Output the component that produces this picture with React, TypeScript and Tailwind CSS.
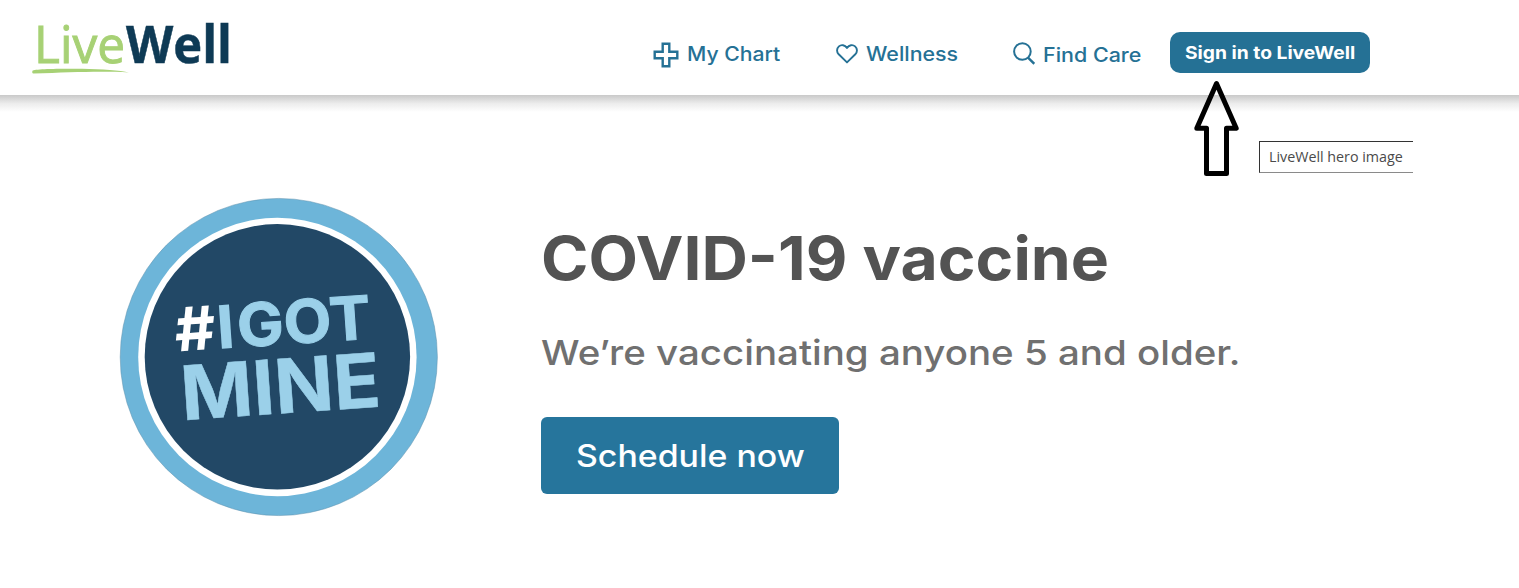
function Logo() {
    return (
        <svg className="h-[84px] w-[230px]" viewBox="0 0 230 84" role="img" aria-label="LiveWell">
            <text x="2" y="62.8" textLength="91" lengthAdjust="spacingAndGlyphs" fill="#a7d175" stroke="#a7d175" strokeWidth="1" className="font-['Open_Sans'] text-[52px] font-normal">Live</text>
            <text x="94" y="62.8" textLength="106" lengthAdjust="spacingAndGlyphs" fill="#0e3a55" stroke="#0e3a55" strokeWidth=".5" className="font-['Open_Sans'] text-[52px] font-bold">Well</text>
            <path d="M.5 70.8 C2 69 25 68.6 50 68.8 C70 69 88 70.7 97 72.4 C70 71 40 72 1.5 73.6 C0 73.2 0 72.4 .5 70.8Z" fill="#a7d175" />
        </svg>
    );
}

function PlusIcon() {
    return (
        <svg className="h-[26px] w-[26px]" viewBox="0 0 26 26" fill="none" stroke="#257195" strokeWidth="2.4">
            <path d="M9.7 1.7h6.6v8h8v6.6h-8v8H9.7v-8h-8V9.7h8z" />
        </svg>
    );
}

function HeartIcon() {
    return (
        <svg className="h-[20px] w-[22px]" viewBox="0 0 22 20" fill="none" stroke="#257195" strokeWidth="1.9" strokeLinejoin="round">
            <path d="M11 3.9C8.8.9 5.3.2 2.9 2.4.5 4.6.5 8 2.7 10.3L11 18.4l8.3-8.1c2.2-2.3 2.2-5.7-.2-7.9C16.7.2 13.2.9 11 3.9z" />
        </svg>
    );
}

function SearchIcon() {
    return (
        <svg className="h-[23px] w-[22px]" viewBox="0 0 22 23" fill="none" stroke="#257195" strokeWidth="2">
            <circle cx="9.4" cy="9.5" r="8.3" />
            <path d="M15 15.6l6.3 6.2" strokeWidth="2.4" />
        </svg>
    );
}

function Badge() {
    return (
        <svg className="h-[320px] w-[320px] shrink-0" viewBox="0 0 320 320" role="img" aria-label="#I GOT MINE">
            <circle cx="159.8" cy="160" r="158.6" fill="#6db5d9" stroke="#5e91ad" strokeWidth=".5" />
            <circle cx="158.4" cy="160" r="139.2" fill="#fff" />
            <circle cx="158.4" cy="159.8" r="132.7" fill="#224866" />
            <g className="font-['Inter'] font-bold" fill="#9bd0e9">
                <text transform="translate(57 154.5) rotate(-4)" fontSize="60" textLength="41" lengthAdjust="spacingAndGlyphs" fill="#fff">#</text>
                <text transform="translate(98.5 152) rotate(-4)" fontSize="60" textLength="19" lengthAdjust="spacingAndGlyphs">I</text>
                <text transform="translate(119.5 150.6) rotate(-4)" fontSize="60" textLength="134" lengthAdjust="spacingAndGlyphs" stroke="#9bd0e9" strokeWidth="1">GOT</text>
                <text transform="translate(63.5 223.3) rotate(-4)" fontSize="75" textLength="200" lengthAdjust="spacingAndGlyphs" stroke="#9bd0e9" strokeWidth=".5">MINE</text>
            </g>
        </svg>
    );
}

function Arrow() {
    return (
        <svg className="absolute left-[1190px] top-[78px] h-[102px] w-[52px]" viewBox="0 0 52 102" fill="none" stroke="#000" strokeWidth="5" strokeLinejoin="round">
            <path d="M26.5 5.5 L46.2 50.3 H36.5 V95.5 H16.5 V50.3 H6.8 Z" />
        </svg>
    );
}

export default function App() {
    return (
        <div className="relative h-[588px] w-[1519px] overflow-hidden bg-white font-['Inter',sans-serif]">
            <header className="flex h-[95px] items-start bg-white pl-[32px] text-[19.5px] font-medium leading-6 text-[#257195]">
                <div className="w-[621px]">
                    <Logo />
                </div>
                <a className="flex w-[183px] gap-[8px] pt-[42px]">
                    <PlusIcon />
                    <span className="origin-left scale-x-[1.085] whitespace-nowrap">My Chart</span>
                </a>
                <a className="flex w-[177px] gap-[8px] pt-[42px]">
                    <span className="pt-[2px]"><HeartIcon /></span>
                    <span className="origin-left scale-x-[1.095] whitespace-nowrap">Wellness</span>
                </a>
                <a className="flex w-[157px] gap-[8px] pt-[42px]">
                    <SearchIcon />
                    <span className="origin-left scale-x-[1.1] whitespace-nowrap pt-px">Find Care</span>
                </a>
                <button className="mt-[32px] flex h-[41px] w-[200px] items-center whitespace-nowrap rounded-[10px] bg-[#257195] pl-[15px] text-[17.5px] font-bold text-white">
                    <span className="origin-left scale-x-[1.1]">Sign in to LiveWell</span>
                </button>
            </header>
            <div className="h-[17px] bg-linear-to-b from-[#c9c9c9] via-[#ececec] to-white" />

            <main className="flex pl-[119px] pt-[85px]">
                <Badge />
                <section className="ml-[102px] pt-[24px]">
                    <h1 className="h-[74px] w-fit origin-left scale-x-[1.062] whitespace-nowrap text-[60.5px] font-bold leading-[74px] text-[#535353]">COVID-19 vaccine</h1>
                    <p className="mt-[37px] h-[42px] w-fit origin-left scale-x-[1.115] whitespace-nowrap text-[34.5px] font-[550] leading-[42px] text-[#707070]">We’re vaccinating anyone 5 and older.</p>
                    <button className="mt-[43px] flex h-[77px] w-[298px] items-center whitespace-nowrap rounded-md bg-[#26759c] pl-[35px] pt-px text-[31px] font-medium text-white">
                        <span className="origin-left scale-x-[1.092]">Schedule now</span>
                    </button>
                </section>
            </main>

            <div className="absolute left-[1259px] top-[141px] h-[32px] w-[154px] whitespace-nowrap border-b border-l border-t border-b-[#8a8a8a] border-l-[#333] border-t-[#333] bg-white pl-[9px] font-['Open_Sans',sans-serif] text-[14.5px] font-normal leading-[29px] text-[#4a4a4a]">
                <span className="inline-block origin-left scale-x-[.985]">LiveWell hero image</span>
            </div>
            <Arrow />
        </div>
    );
}
